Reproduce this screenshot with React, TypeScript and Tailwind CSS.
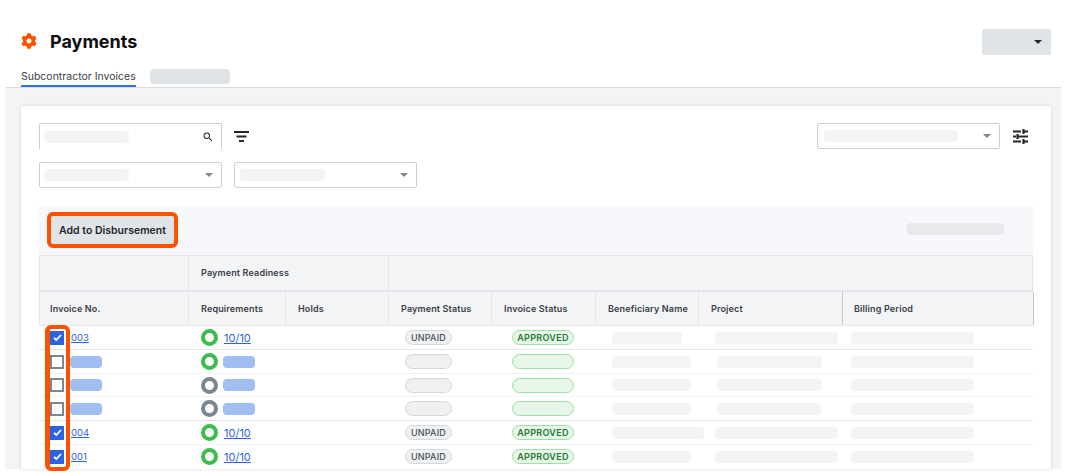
import { FaCog } from "react-icons/fa"
import { MdSearch } from "react-icons/md"

type Row = {
  height: string
  line: string
  invoice: string | null
  checked: boolean
  ready: boolean
  beneficiary: string
  project: string
  projectPad: string
}

const rows: Row[] = [
  { height: "h-[24px]", line: "border-[#e4e6e9]", invoice: "003", checked: true, ready: true, beneficiary: "w-[70px]", project: "w-[123px]", projectPad: "pl-[17px]" },
  { height: "h-[24px]", line: "border-[#f0f1f3]", invoice: null, checked: false, ready: true, beneficiary: "w-[79px]", project: "w-[105px]", projectPad: "pl-[19px]" },
  { height: "h-[23px]", line: "border-[#f3f4f6]", invoice: null, checked: false, ready: false, beneficiary: "w-[79px]", project: "w-[105px]", projectPad: "pl-[19px]" },
  { height: "h-[24px]", line: "border-[#e4e6e9]", invoice: null, checked: false, ready: false, beneficiary: "w-[79px]", project: "w-[104px]", projectPad: "pl-[19px]" },
  { height: "h-[24px]", line: "border-[#f0f1f3]", invoice: "004", checked: true, ready: true, beneficiary: "w-[92px]", project: "w-[123px]", projectPad: "pl-[17px]" },
  { height: "h-[24px]", line: "border-transparent", invoice: "001", checked: true, ready: true, beneficiary: "w-[79px]", project: "w-[123px]", projectPad: "pl-[17px]" },
]

const columns = "grid grid-cols-[149px_97px_103px_103px_104px_103px_144px_191px]"

function Skeleton({ className }: { className: string }) {
  return <div className={`rounded-[4px] bg-[#f3f4f6] ${className}`} />
}

function Caret({ className }: { className: string }) {
  return <div className={`h-0 w-0 border-x-[4px] border-t-[4px] border-x-transparent ${className}`} />
}

function FilterIcon() {
  return (
    <svg viewBox="0 0 15 11" className="ml-[12px] mt-[1px] h-[11px] w-[15px] text-[#23272b]" fill="none" stroke="currentColor" strokeWidth="1.8">
      <path d="M0 1h15M2.5 5.5h10M5 10h5" />
    </svg>
  )
}

function TuneIcon() {
  return (
    <svg viewBox="0 0 15 15" className="ml-[13px] mr-[5px] h-[15px] w-[15px] text-[#23272b]" fill="none" stroke="currentColor" strokeWidth="2.2">
      <path d="M0 2.5h8M10.5 0v5M10.5 2.5H15M0 7.5h3M4.5 5v5M4.5 7.5H15M0 12.5h8M10.5 10v5M10.5 12.5H15" />
    </svg>
  )
}

function SelectBox({ width, bar }: { width: string; bar: string }) {
  return (
    <div className={`flex h-[26px] items-center justify-between rounded-[2px] border border-[#ccd0d4] pl-[5px] pr-[8px] ${width}`}>
      <Skeleton className={`h-[12px] ${bar}`} />
      <Caret className="border-t-[#7a8791]" />
    </div>
  )
}

function HeaderCell({ label, className = "" }: { label: string; className?: string }) {
  return (
    <div className={`flex items-center border-r border-[#e4e6e9] text-[9px] font-semibold tracking-[0.15px] text-[#3a4047] ${className}`}>
      {label}
    </div>
  )
}

export default function App() {
  return (
    <div className="h-[474px] w-[1067px] overflow-hidden bg-white font-['Inter',sans-serif]">
      {/* Title */}
      <div className="flex h-[69px] items-start justify-between pl-[21px] pr-[16px] pt-[29px]">
        <div className="flex h-[24px] items-center">
          <FaCog className="h-[16px] w-[16px] text-[#fb5200]" />
          <h1 className="ml-[13px] text-[18px] font-bold text-[#0c0d0e]">Payments</h1>
        </div>
        <div className="flex h-[26px] w-[69px] items-center justify-end rounded-[2px] bg-[#e1e4e7] pr-[9px]">
          <Caret className="border-t-[#23272b]" />
        </div>
      </div>

      {/* Tabs */}
      <div className="flex h-[18px] items-start pl-[21px]">
        <div className="h-[18px] w-[115px] border-b-2 border-[#2f6fed] text-[10.5px] leading-[15px] whitespace-nowrap text-[#3a4047]">
          Subcontractor Invoices
        </div>
        <div className="ml-[14px] h-[15px] w-[80px] rounded-[4px] bg-[#e1e4e7]" />
      </div>

      <div className="ml-[5px] h-[382px] w-[1056px] border-t border-[#d9dcdf] bg-[#f3f4f6] pl-[16px] pr-[10px] pt-[18px]">
        <div className="h-[363px] rounded-t-[3px] bg-white px-[18px] pt-[17px] shadow-[0_0_4px_rgba(0,0,0,0.12)]">
          {/* Filters */}
          <div className="flex items-start justify-between">
            <div className="flex items-center">
              <div className="flex h-[26px] w-[183px] items-center justify-between rounded-t-[2px] border-x border-t border-[#ccd0d4] pl-[4px] pr-[7px]">
                <Skeleton className="h-[12px] w-[85px]" />
                <MdSearch className="h-[12px] w-[12px] text-[#23272b]" />
              </div>
              <FilterIcon />
            </div>
            <div className="flex items-center">
              <SelectBox width="w-[183px]" bar="ml-[1px] w-[134px]" />
              <TuneIcon />
            </div>
          </div>
          <div className="mt-[13px] flex gap-[12px]">
            <SelectBox width="w-[183px]" bar="-ml-[1px] w-[85px]" />
            <SelectBox width="w-[183px]" bar="w-[85px]" />
          </div>

          {/* Toolbar */}
          <div className="mt-[18px] flex h-[49px] items-start justify-between bg-[#f7f8fc] pl-[8px] pr-[29px] pt-[6px]">
            <button className="h-[36px] w-[131px] rounded-[6px] border-4 border-[#fb5200] bg-[#e1e4e7] pt-[1px] text-[10.5px] font-semibold text-[#23272b]">
              Add to Disbursement
            </button>
            <div className="mt-[11px] h-[12px] w-[97px] rounded-[4px] bg-[#e8e9eb]" />
          </div>

          {/* Table */}
          <div className="relative w-[994px]">
            <div className={`${columns} h-[35px] border-x border-t border-[#e4e6e9] bg-[#f3f4f6]`}>
              <div className="border-r border-[#e4e6e9]" />
              <HeaderCell label="Payment Readiness" className="col-span-2 pb-[1px] pl-[12px]" />
            </div>
            <div className={`${columns} h-[36px] border-y border-l border-t-2 border-[#e4e6e9] bg-[#f3f4f6]`}>
              <HeaderCell label="Invoice No." className="pl-[10px]" />
              <HeaderCell label="Requirements" className="pl-[12px]" />
              <HeaderCell label="Holds" className="pl-[12px]" />
              <HeaderCell label="Payment Status" className="pl-[12px]" />
              <HeaderCell label="Invoice Status" className="pl-[12px]" />
              <HeaderCell label="Beneficiary Name" className="pl-[12px]" />
              <HeaderCell label="Project" className="border-r-[#c4c8cc] pl-[12px]" />
              <HeaderCell label="Billing Period" className="border-r-[#c4c8cc] pl-[11px]" />
            </div>

            {rows.map((row, i) => (
              <div key={i} className={`${columns} ${row.height} items-center border-b ${row.line}`}>
                <div className="flex items-center pl-[11px]">
                  {row.checked ? (
                    <div className="flex h-[14px] w-[14px] items-center justify-center bg-[#2f62e0]">
                      <svg viewBox="0 0 9 9" className="h-[9px] w-[9px]" fill="none" stroke="white" strokeWidth="1.8">
                        <path d="M1 4.8l2.3 2.2L8 2" />
                      </svg>
                    </div>
                  ) : (
                    <div className="h-[14px] w-[14px] border-2 border-[#7a8791] bg-white" />
                  )}
                  {row.invoice ? (
                    <a className="ml-[7px] mt-[1px] text-[9.5px] text-[#2f62e0] underline">{row.invoice}</a>
                  ) : (
                    <div className="ml-[6px] h-[12px] w-[32px] rounded-[4px] bg-[#a1bef2]" />
                  )}
                </div>
                <div className="flex items-center pl-[13px]">
                  <div className={`h-[17px] w-[17px] rounded-full border-4 ${row.ready ? "border-[#3fbc4f]" : "border-[#7a8791]"}`} />
                  {row.invoice ? (
                    <a className="ml-[6px] mt-[1px] text-[11px] text-[#2f62e0] underline">10/10</a>
                  ) : (
                    <div className="ml-[5px] h-[12px] w-[32px] rounded-[4px] bg-[#a1bef2]" />
                  )}
                </div>
                <div />
                <div className="pl-[17px]">
                  <div className="flex h-[15px] w-[47px] items-center justify-center rounded-full border border-[#d5d8db] bg-[#eff0f2] text-[9px] font-medium tracking-[0.2px] text-[#4a5158]">
                    {row.invoice ? "UNPAID" : ""}
                  </div>
                </div>
                <div className="pl-[21px]">
                  <div className="flex h-[15px] w-[62px] items-center justify-center rounded-full border border-[#9fdfa5] bg-[#e8f6e9] text-[9px] font-semibold tracking-[0.3px] text-[#23792f]">
                    {row.invoice ? "APPROVED" : ""}
                  </div>
                </div>
                <div className="pl-[17px]">
                  <Skeleton className={`h-[12px] ${row.beneficiary}`} />
                </div>
                <div className={row.projectPad}>
                  <Skeleton className={`h-[12px] ${row.project}`} />
                </div>
                <div className="pl-[9px]">
                  <Skeleton className="h-[12px] w-[123px]" />
                </div>
              </div>
            ))}

            {/* Highlight over the checkbox column */}
            <div className="absolute left-[6px] top-[70px] h-[146px] w-[25px] rounded-[6px] border-4 border-l-[5px] border-[#fb5200]" />
          </div>
        </div>
      </div>
    </div>
  )
}
